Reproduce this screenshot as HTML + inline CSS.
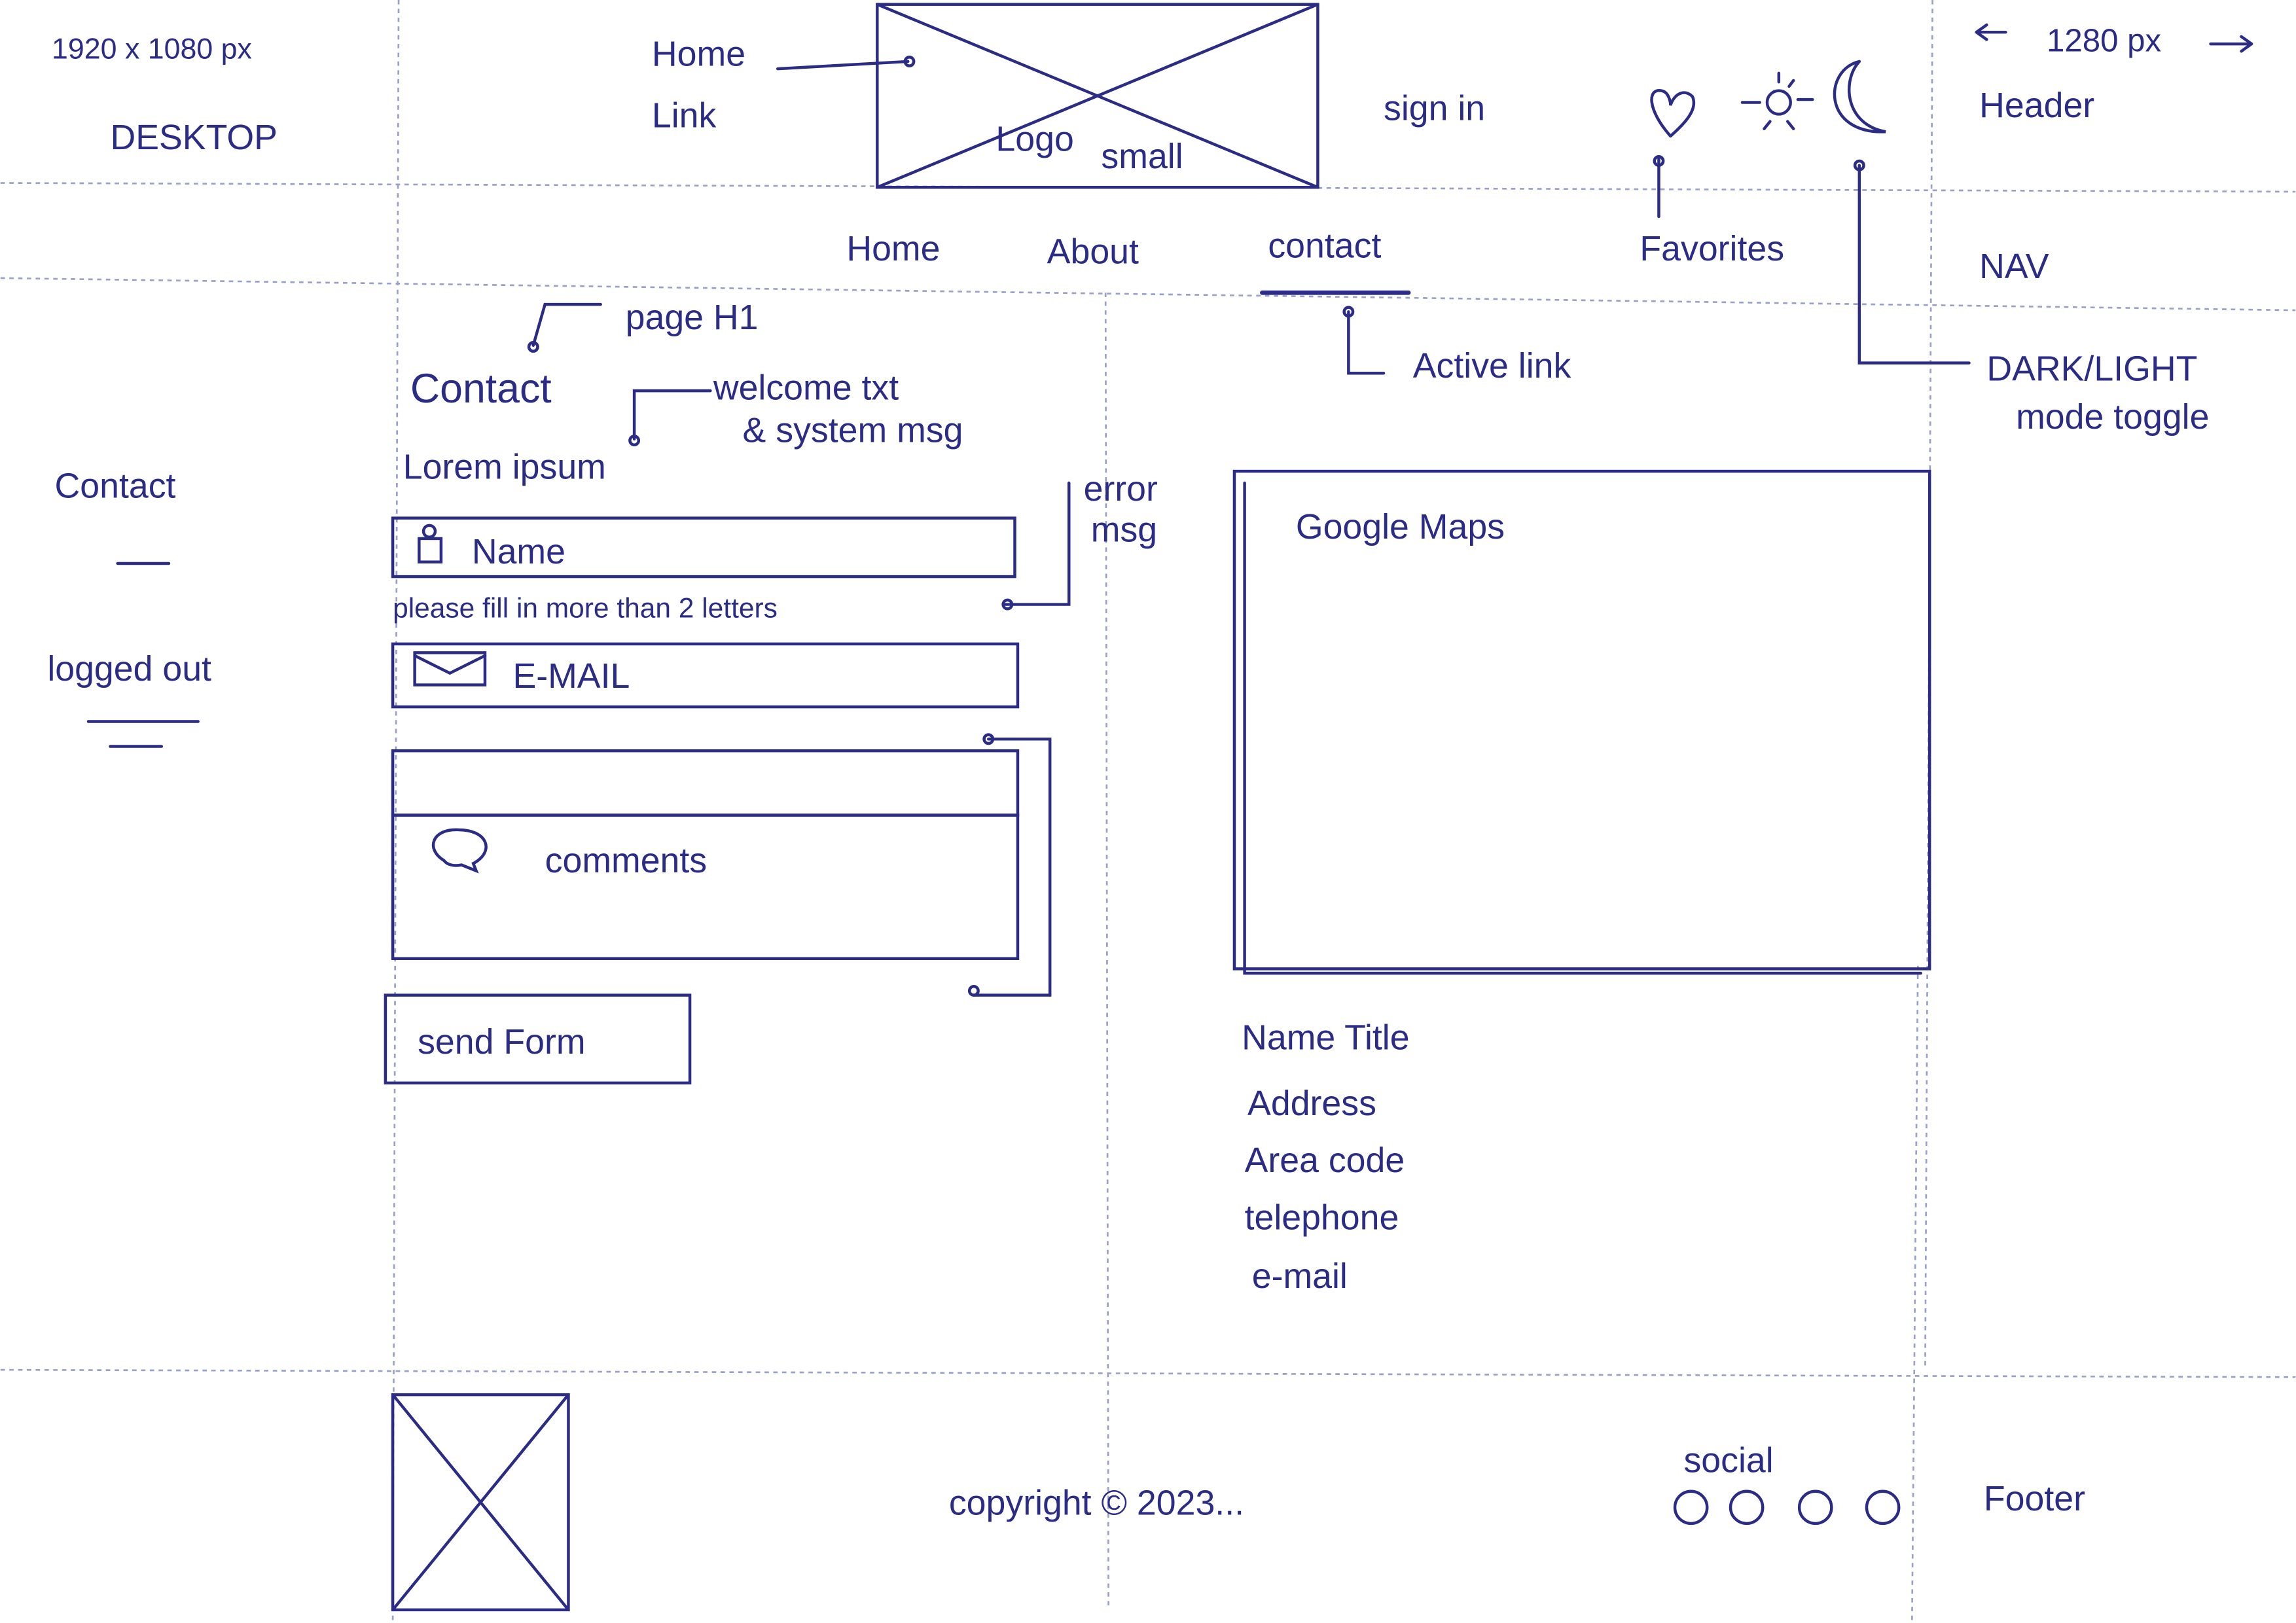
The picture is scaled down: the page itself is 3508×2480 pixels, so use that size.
<!DOCTYPE html>
<html><head><meta charset="utf-8"><style>
html,body{margin:0;padding:0;background:#fff;}
svg{display:block;}
text{font-family:"Liberation Sans",sans-serif;fill:#2b2c86;}
</style></head><body>
<svg width="3508" height="2480" viewBox="0 0 1568 1109" xmlns="http://www.w3.org/2000/svg">
<rect width="1568" height="1109" fill="#fff"/>
<g stroke="#9aa0c8" stroke-width="1.2" stroke-dasharray="3,3" fill="none">
<line x1="0" y1="125" x2="1568" y2="131"/>
<line x1="0" y1="190" x2="1568" y2="212"/>
<line x1="0" y1="936" x2="1568" y2="941"/>
<line x1="272" y1="0" x2="268" y2="1109"/>
<line x1="1320" y1="0" x2="1315" y2="935"/>
<line x1="1310" y1="660" x2="1306" y2="1109"/>
<line x1="755" y1="200" x2="757" y2="1100"/>
</g>
<g stroke="#2b2c86" stroke-width="2" fill="none" stroke-linecap="round">
<rect x="599" y="3" width="301" height="125"/>
<line x1="599" y1="3" x2="900" y2="128"/><line x1="900" y1="3" x2="599" y2="128"/>
<path d="M531 47 L620 42"/><circle cx="621" cy="42" r="3"/>
<path d="M1141 93 C1125 75 1125 60 1135 62 C1140 63 1141 70 1141 72 C1143 65 1150 60 1156 66 C1160 75 1150 85 1141 93"/>
<circle cx="1215" cy="70" r="8"/>
<path d="M1190 70h12M1228 68h10M1215 50v6M1205 88l4-5M1225 88l-4-5M1225 55l-3 4"/>
<path d="M1270 42 C1245 48 1245 92 1288 90 C1260 85 1258 55 1270 42"/>
<path d="M1133 108 V148"/><circle cx="1133" cy="110" r="3"/>
<path d="M862 200 H962" stroke-width="3"/>
<path d="M1270 113 V248 H1345"/><circle cx="1270" cy="113" r="3"/>
<path d="M921 213 V255 H945"/><circle cx="921" cy="213" r="3"/>
<path d="M410 208 H372 L364 236"/><circle cx="364" cy="237" r="3"/>
<path d="M485 267 H433 V300"/><circle cx="433" cy="301" r="3"/>
<path d="M80 385 H115"/><path d="M60 493 H135"/><path d="M75 510 H110"/>
<rect x="268" y="354" width="425" height="40"/>
<circle cx="293" cy="363" r="4"/><rect x="286" y="368" width="15" height="16"/>
<rect x="268" y="440" width="427" height="43"/>
<rect x="283" y="446" width="48" height="22"/><path d="M283 448 L307 460 L331 448"/>
<rect x="268" y="513" width="427" height="44"/>
<rect x="268" y="557" width="427" height="98"/>
<path d="M303 588 C290 580 295 566 313 567 C333 567 338 582 323 590 L325 595 L315 591 C310 592 305 591 303 588"/>
<rect x="263" y="680" width="208" height="60"/>
<path d="M686 413 H730 V330"/><circle cx="688" cy="413" r="3"/>
<path d="M675 505 H717 V680 H665"/><circle cx="675" cy="505" r="3"/><circle cx="665" cy="677" r="3"/>
<rect x="843" y="322" width="475" height="340"/>
<path d="M850 330 V665 H1312"/>
<rect x="268" y="953" width="120" height="147"/>
<line x1="268" y1="953" x2="388" y2="1100"/><line x1="388" y1="953" x2="268" y2="1100"/>
<circle cx="1155" cy="1030" r="11"/><circle cx="1193" cy="1030" r="11"/><circle cx="1240" cy="1030" r="11"/><circle cx="1286" cy="1030" r="11"/>
<path d="M1350 22h20M1350 22l7-5M1350 22l7 5M1510 30h28M1538 30l-7-5M1538 30l-7 5"/>
</g>
<g font-size="24">
<text x="35" y="40" font-size="20">1920 x 1080 px</text>
<text x="75" y="102">DESKTOP</text>
<text x="445" y="45">Home</text><text x="445" y="87">Link</text>
<text x="680" y="103">Logo</text><text x="752" y="115">small</text>
<text x="945" y="82">sign in</text>
<text x="1398" y="35" font-size="22">1280 px</text>
<text x="1352" y="80">Header</text>
<text x="578" y="178">Home</text><text x="715" y="180">About</text><text x="866" y="176">contact</text>
<text x="1120" y="178">Favorites</text>
<text x="1352" y="190">NAV</text>
<text x="427" y="225">page H1</text>
<text x="965" y="258">Active link</text>
<text x="1357" y="260">DARK/LIGHT</text><text x="1377" y="293">mode toggle</text>
<text x="280" y="275" font-size="28">Contact</text>
<text x="487" y="273">welcome txt</text><text x="507" y="302">&amp; system msg</text>
<text x="275" y="327">Lorem ipsum</text>
<text x="37" y="340">Contact</text>
<text x="32" y="465">logged out</text>
<text x="740" y="342">error</text><text x="745" y="370">msg</text>
<text x="322" y="385">Name</text>
<text x="268" y="422" font-size="19">please fill in more than 2 letters</text>
<text x="350" y="470">E-MAIL</text>
<text x="372" y="596">comments</text>
<text x="285" y="720">send Form</text>
<text x="885" y="368">Google Maps</text>
<text x="848" y="717">Name Title</text>
<text x="852" y="762">Address</text>
<text x="850" y="801">Area code</text>
<text x="850" y="840">telephone</text>
<text x="855" y="880">e-mail</text>
<text x="648" y="1035">copyright © 2023...</text>
<text x="1150" y="1006">social</text>
<text x="1355" y="1032">Footer</text>
</g>
</svg>
</body></html>
